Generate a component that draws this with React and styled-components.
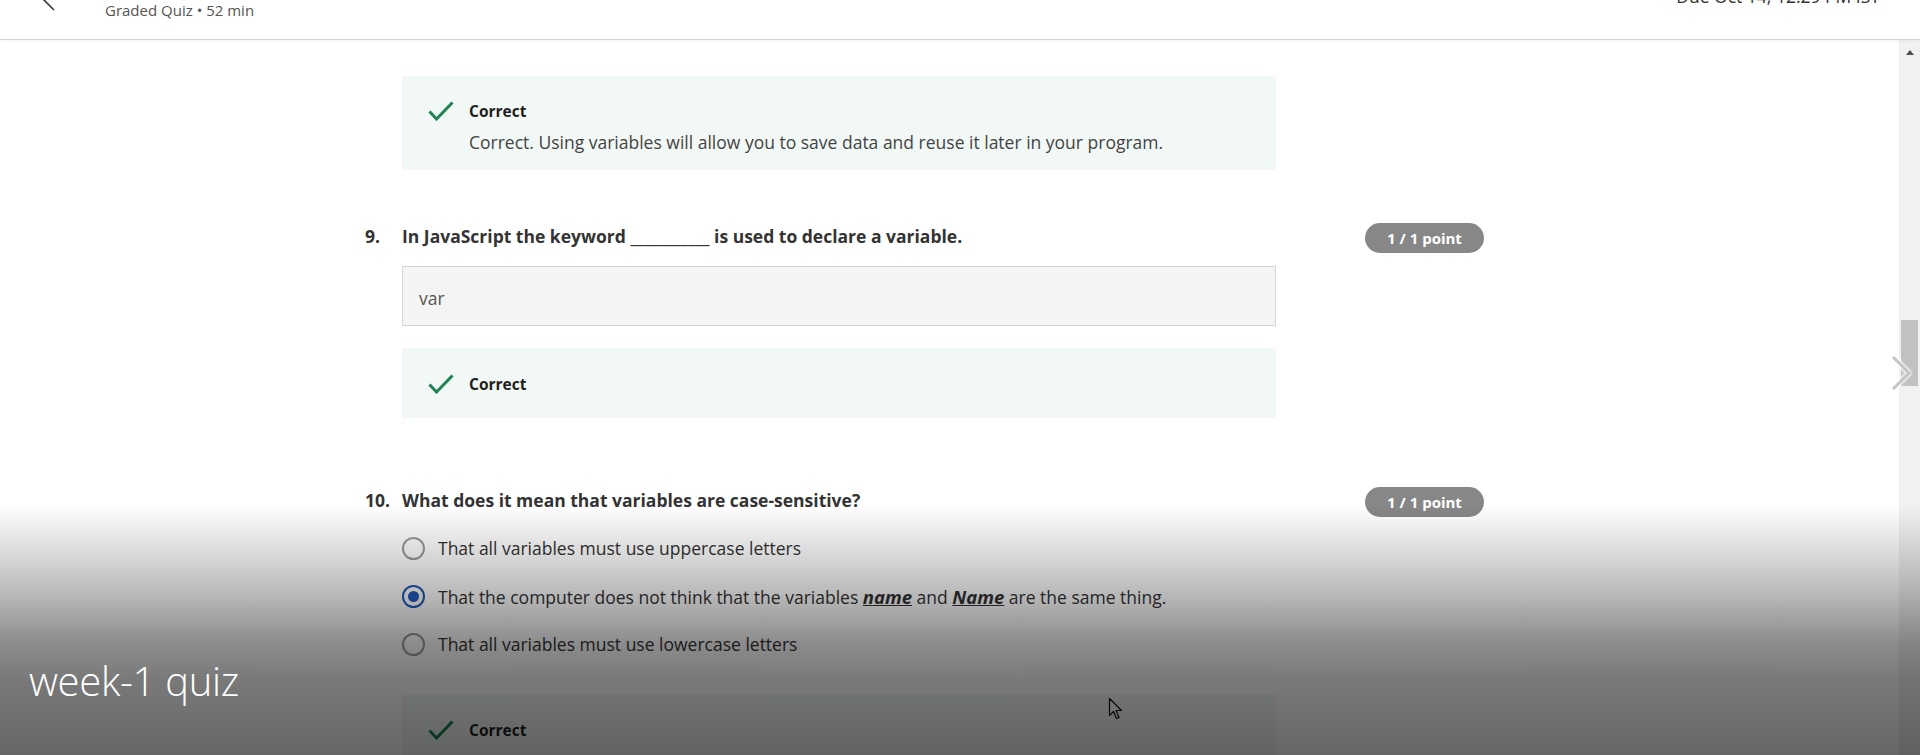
import React from 'react';
import styled, { createGlobalStyle } from 'styled-components';

const GlobalStyle = createGlobalStyle`
  html, body {
    margin: 0;
    padding: 0;
    background: #fff;
  }
  body {
    font-family: 'Open Sans', 'Noto Sans', sans-serif;
    color: #333;
    overflow: hidden;
  }
`;

const Page = styled.div`
  position: relative;
  width: 1920px;
  height: 755px;
  display: flex;
  flex-direction: column;
  overflow: hidden;
`;

const Header = styled.header`
  position: relative;
  z-index: 1;
  flex-shrink: 0;
  height: 39px;
  display: flex;
  align-items: flex-start;
  padding: 0 40px 0 42px;
  border-bottom: 1px solid #d2d2d2;
  box-shadow: 0 1px 3px rgba(0, 0, 0, 0.06);
  background: #fff;
  overflow: hidden;
`;

const BackArrow = styled.svg`
  flex-shrink: 0;
  margin-top: -12px;
`;

const HeaderInfo = styled.div`
  display: flex;
  flex-direction: column;
  margin: -29px 0 0 49px;
`;

const CourseTitle = styled.div`
  font-size: 20px;
  line-height: 28px;
  font-weight: 600;
  color: #1f1f1f;
`;

const CourseMeta = styled.div`
  font-size: 15px;
  line-height: 22px;
  color: #555;
`;

const DueDate = styled.div`
  margin: -16px 0 0 auto;
  font-size: 17.5px;
  line-height: 24px;
  color: #333;
`;

const Main = styled.div`
  flex: 1;
  display: flex;
  min-height: 0;
`;

const Content = styled.main`
  flex: 1;
  padding: 36px 0 0 365px;
  overflow: hidden;
`;

const ScrollTrack = styled.div`
  width: 21px;
  flex-shrink: 0;
  background: #f1f1f1;
  display: flex;
  flex-direction: column;
  align-items: center;
`;

const ScrollUp = styled.div`
  width: 0;
  height: 0;
  margin-top: 10px;
  border-left: 4.5px solid transparent;
  border-right: 4.5px solid transparent;
  border-bottom: 5px solid #505050;
`;

const ScrollThumb = styled.div`
  width: 17px;
  height: 66px;
  margin-top: 265px;
  background: #c1c1c1;
`;

const Feedback = styled.div`
  width: 874px;
  box-sizing: border-box;
  margin: ${(p) => p.$gap || 0}px 0 0 ${(p) => (p.$indent ? 37 : 0)}px;
  padding: ${(p) => (p.$hasText ? '24px 26px 15px' : '25px 26px 23px')};
  background: #f1f8f5;
  display: flex;
  align-items: flex-start;
`;

const CheckIcon = styled.svg`
  flex-shrink: 0;
  margin: 1px 15px 0 0;
`;

const FeedbackBody = styled.div`
  display: flex;
  flex-direction: column;
  gap: 7px;
`;

const FeedbackLabel = styled.div`
  font-size: 15.5px;
  line-height: 22px;
  font-weight: 700;
  color: #1f1f1f;
`;

const FeedbackText = styled.div`
  font-size: 17.5px;
  line-height: 26px;
  color: #444;
`;

const Question = styled.section`
  width: 1119px;
  margin-top: ${(p) => p.$gap}px;
`;

const QuestionHead = styled.div`
  display: flex;
  align-items: flex-start;
`;

const QNum = styled.div`
  width: 37px;
  flex-shrink: 0;
  font-size: 17.5px;
  line-height: 26px;
  font-weight: 700;
  color: #333;
`;

const QText = styled.div`
  font-size: 17.5px;
  line-height: 26px;
  font-weight: 700;
  color: #333;
`;

const Badge = styled.span`
  margin-left: auto;
  width: 119px;
  height: 30px;
  border-radius: 15px;
  background: #878787;
  color: #fff;
  font-size: 15px;
  font-weight: 700;
  display: flex;
  align-items: center;
  justify-content: center;
`;

const QBody = styled.div`
  margin-left: 37px;
  width: 874px;
`;

const AnswerField = styled.div`
  margin-top: 13px;
  height: 60px;
  box-sizing: border-box;
  padding: 3px 16px 0;
  border: 1px solid #d6d6d6;
  background: #f4f4f4;
  display: flex;
  align-items: center;
  font-size: 17.5px;
  color: #555;
`;

const Options = styled.div`
  margin-top: 19px;
  display: flex;
  flex-direction: column;
  gap: 24px;
`;

const Option = styled.label`
  height: 24px;
  display: flex;
  align-items: center;
  gap: 13px;
  font-size: 17.5px;
  color: #333;
`;

const Radio = styled.span`
  width: 23px;
  height: 23px;
  flex-shrink: 0;
  box-sizing: border-box;
  border-radius: 50%;
  border: 2px solid ${(p) => (p.$checked ? '#1f5bbd' : '#9a9a9a')};
  background: #fff;
  display: flex;
  align-items: center;
  justify-content: center;

  &::after {
    content: '';
    display: ${(p) => (p.$checked ? 'block' : 'none')};
    width: 11px;
    height: 11px;
    border-radius: 50%;
    background: #1f5bbd;
  }
`;

const VarName = styled.span`
  font-size: 18.5px;
  font-weight: 700;
  font-style: italic;
  text-decoration: underline;
`;

const SideNext = styled.svg`
  position: absolute;
  left: 1889px;
  top: 354px;
  filter: drop-shadow(0 0 1.5px #fff) drop-shadow(0 0 1px #fff);
`;

const Cursor = styled.svg`
  position: absolute;
  left: 1108px;
  top: 697px;
`;

const Overlay = styled.div`
  position: absolute;
  left: 0;
  right: 0;
  bottom: 0;
  height: 250px;
  box-sizing: border-box;
  padding: 150px 0 0 29px;
  pointer-events: none;
  background: linear-gradient(
    to bottom,
    rgba(0, 0, 0, 0) 0%,
    rgba(0, 0, 0, 0.13) 17%,
    rgba(0, 0, 0, 0.28) 36%,
    rgba(0, 0, 0, 0.45) 55%,
    rgba(0, 0, 0, 0.525) 70%,
    rgba(0, 0, 0, 0.6) 100%
  );
`;

const VideoTitle = styled.div`
  font-family: 'Open Sans', 'Noto Sans', sans-serif;
  font-weight: 300;
  font-size: 40px;
  line-height: 52px;
  letter-spacing: -0.3px;
  color: #fff;
`;

function Check() {
  return (
    <CheckIcon width="26" height="20" viewBox="0 0 26 20">
      <path d="M1.5 10.5 L8.5 18 L24.5 1.5" fill="none" stroke="#1f8354" strokeWidth="3" />
    </CheckIcon>
  );
}

function CorrectBox({ text, gap, indent }) {
  return (
    <Feedback $gap={gap} $indent={indent} $hasText={!!text}>
      <Check />
      <FeedbackBody>
        <FeedbackLabel>Correct</FeedbackLabel>
        {text && <FeedbackText>{text}</FeedbackText>}
      </FeedbackBody>
    </Feedback>
  );
}

export default function App() {
  return (
    <>
      <GlobalStyle />
      <Page>
        <Header>
          <BackArrow width="14" height="24" viewBox="0 0 14 24">
            <path d="M12 1 L1.5 11.5 L12 22" fill="none" stroke="#333" strokeWidth="1.6" />
          </BackArrow>
          <HeaderInfo>
            <CourseTitle>Week 1 Quiz</CourseTitle>
            <CourseMeta>Graded Quiz • 52 min</CourseMeta>
          </HeaderInfo>
          <DueDate>Due Oct 14, 12:29 PM IST</DueDate>
        </Header>

        <Main>
          <Content>
            <CorrectBox
              indent
              text="Correct. Using variables will allow you to save data and reuse it later in your program."
            />

            <Question $gap={53}>
              <QuestionHead>
                <QNum>9.</QNum>
                <QText>In JavaScript the keyword ___________ is used to declare a variable.</QText>
                <Badge>1 / 1 point</Badge>
              </QuestionHead>
              <QBody>
                <AnswerField>var</AnswerField>
                <CorrectBox gap={22} />
              </QBody>
            </Question>

            <Question $gap={69}>
              <QuestionHead>
                <QNum>10.</QNum>
                <QText>What does it mean that variables are case-sensitive?</QText>
                <Badge>1 / 1 point</Badge>
              </QuestionHead>
              <QBody>
                <Options>
                  <Option>
                    <Radio />
                    That all variables must use uppercase letters
                  </Option>
                  <Option>
                    <Radio $checked />
                    <span>
                      That the computer does not think that the variables <VarName>name</VarName> and{' '}
                      <VarName>Name</VarName> are the same thing.
                    </span>
                  </Option>
                  <Option>
                    <Radio />
                    That all variables must use lowercase letters
                  </Option>
                </Options>
                <CorrectBox gap={38} />
              </QBody>
            </Question>
          </Content>

          <ScrollTrack>
            <ScrollUp />
            <ScrollThumb />
          </ScrollTrack>
        </Main>

        <SideNext width="26" height="38" viewBox="0 0 26 38">
          <path d="M4 3 L20 19 L4 35" fill="none" stroke="#c4c4c4" strokeWidth="3" />
        </SideNext>

        <Cursor width="16" height="24" viewBox="0 0 16 24">
          <path
            d="M1.5 1.5 L1.5 18.5 L5.5 14.5 L8.5 21.5 L11 20.5 L8 13.5 L13.5 13.5 Z"
            fill="#fff"
            stroke="#111"
            strokeWidth="1.2"
            strokeLinejoin="round"
          />
        </Cursor>

        <Overlay>
          <VideoTitle>week-1 quiz</VideoTitle>
        </Overlay>
      </Page>
    </>
  );
}
